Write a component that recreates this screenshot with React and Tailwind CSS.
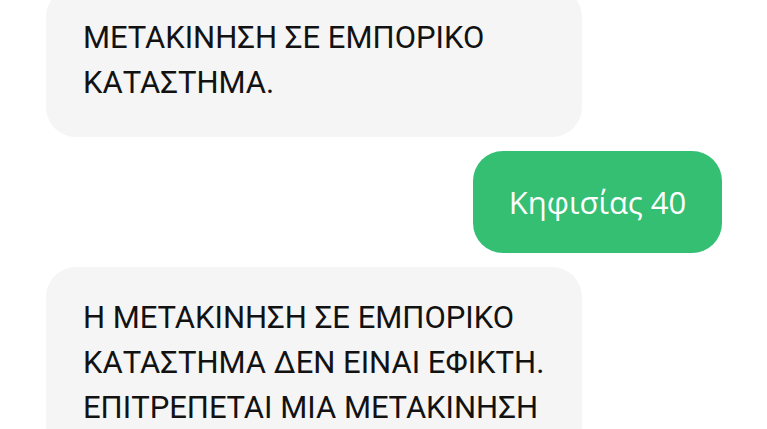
import React from 'react';

const messages = [
  { id: 1, from: 'bot', lines: ['ΜΕΤΑΚΙΝΗΣΗ ΣΕ ΕΜΠΟΡΙΚΟ', 'ΚΑΤΑΣΤΗΜΑ.'] },
  { id: 2, from: 'me', text: 'Κηφισίας 40' },
  {
    id: 3,
    from: 'bot',
    lines: ['Η ΜΕΤΑΚΙΝΗΣΗ ΣΕ ΕΜΠΟΡΙΚΟ', 'ΚΑΤΑΣΤΗΜΑ ΔΕΝ ΕΙΝΑΙ ΕΦΙΚΤΗ.', 'ΕΠΙΤΡΕΠΕΤΑΙ ΜΙΑ ΜΕΤΑΚΙΝΗΣΗ'],
  },
];

const App = () => {
  return (
    <div className="w-[767px] h-[429px] overflow-hidden bg-white font-['Roboto',sans-serif]">
      <div className="flex flex-col gap-[14px] -mt-[13px]">
        {messages.map((m) =>
          m.from === 'bot' ? (
            <div key={m.id} className="pl-[46px]">
              <div className="w-[536px] bg-[#f5f5f5] rounded-[30px] pl-[37px] pr-3 pt-[28px] pb-[32px] text-[#121212] text-[31px] leading-[45px] whitespace-nowrap">
                {m.lines.map((l, i) => (
                  <div key={i}>{l}</div>
                ))}
              </div>
            </div>
          ) : (
            <div key={m.id} className="flex justify-end pr-[45px]">
              <div className="w-[249px] h-[102px] bg-[#34bf73] rounded-[30px] flex items-center justify-center text-white text-[31px] font-['Open_Sans',sans-serif]">
                {m.text}
              </div>
            </div>
          )
        )}
      </div>
    </div>
  );
};

export default App;
